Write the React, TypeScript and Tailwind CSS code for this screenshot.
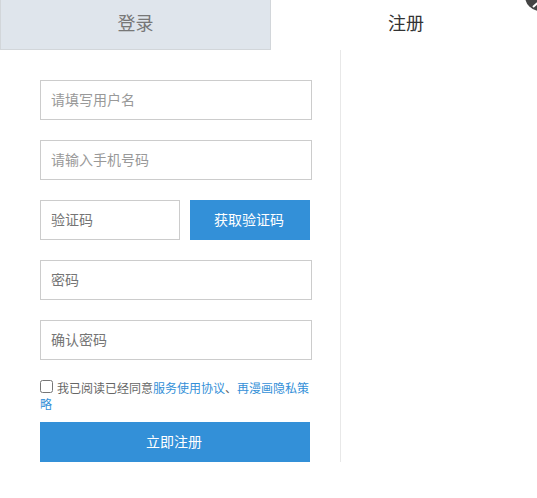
import React from "react";

const font = { fontFamily: '"Noto Sans CJK SC", "Noto Sans", sans-serif' };

function Field({ placeholder, className = "w-[272px]", light = false }: { placeholder: string; className?: string; light?: boolean }) {
  return (
    <input
      type="text"
      placeholder={placeholder}
      className={`h-10 ${className} border border-[#ccc] bg-white px-[10px] pb-[2px] text-sm outline-none ${light ? "placeholder:text-[#999]" : "placeholder:text-[#757575]"}`}
    />
  );
}

export default function App() {
  return (
    <div className="relative h-[498px] w-[537px] overflow-hidden bg-white" style={font}>
      <svg className="absolute left-[525px] top-[-19px]" width="30" height="30" viewBox="0 0 30 30">
        <circle cx="15" cy="15" r="15" fill="#444" />
        <path d="M13 21 L7.5 26.5" stroke="#fff" strokeWidth="0" />
        <path d="M12.5 22 L8 26" stroke="#fff" strokeWidth="2" />
      </svg>
      <div className="flex h-[50px]">
        <div className="flex h-[50px] w-[271px] shrink-0 items-center justify-center border border-t-0 border-[#d2d6da] bg-[#dfe5ec] pb-[6px] text-lg text-[#777]">
          登录
        </div>
        <div className="flex h-[50px] w-[270px] shrink-0 items-center justify-center pb-[6px] text-lg text-[#333]">注册</div>
      </div>
      <div className="h-[412px] w-[341px] border-r border-[#e8e8e8] pl-10 pt-[30px]">
        <div className="flex flex-col gap-5">
          <Field placeholder="请填写用户名" light />
          <Field placeholder="请输入手机号码" light />
          <div className="flex gap-[10px]">
            <Field placeholder="验证码" className="w-[140px]" />
            <button className="h-10 w-[120px] bg-[#3390d8] pr-[2px] pb-[2px] text-sm text-white">获取验证码</button>
          </div>
          <Field placeholder="密码" />
          <Field placeholder="确认密码" />
        </div>
        <div className="mt-5 w-[270px] whitespace-nowrap text-xs leading-[16px] text-[#666]">
          <input type="checkbox" className="mr-1 h-[13px] w-[13px] align-[0px]" />
          <span>我已阅读已经同意</span><a className="text-[#3390d8]">服务使用协议</a><span>、</span><a className="text-[#3390d8]">再漫画隐私策</a>
          <br />
          <a className="text-[#3390d8]">略</a>
        </div>
        <button className="mt-[10px] h-10 w-[270px] bg-[#3390d8] pr-[2px] pb-[2px] text-sm text-white">立即注册</button>
      </div>
    </div>
  );
}
